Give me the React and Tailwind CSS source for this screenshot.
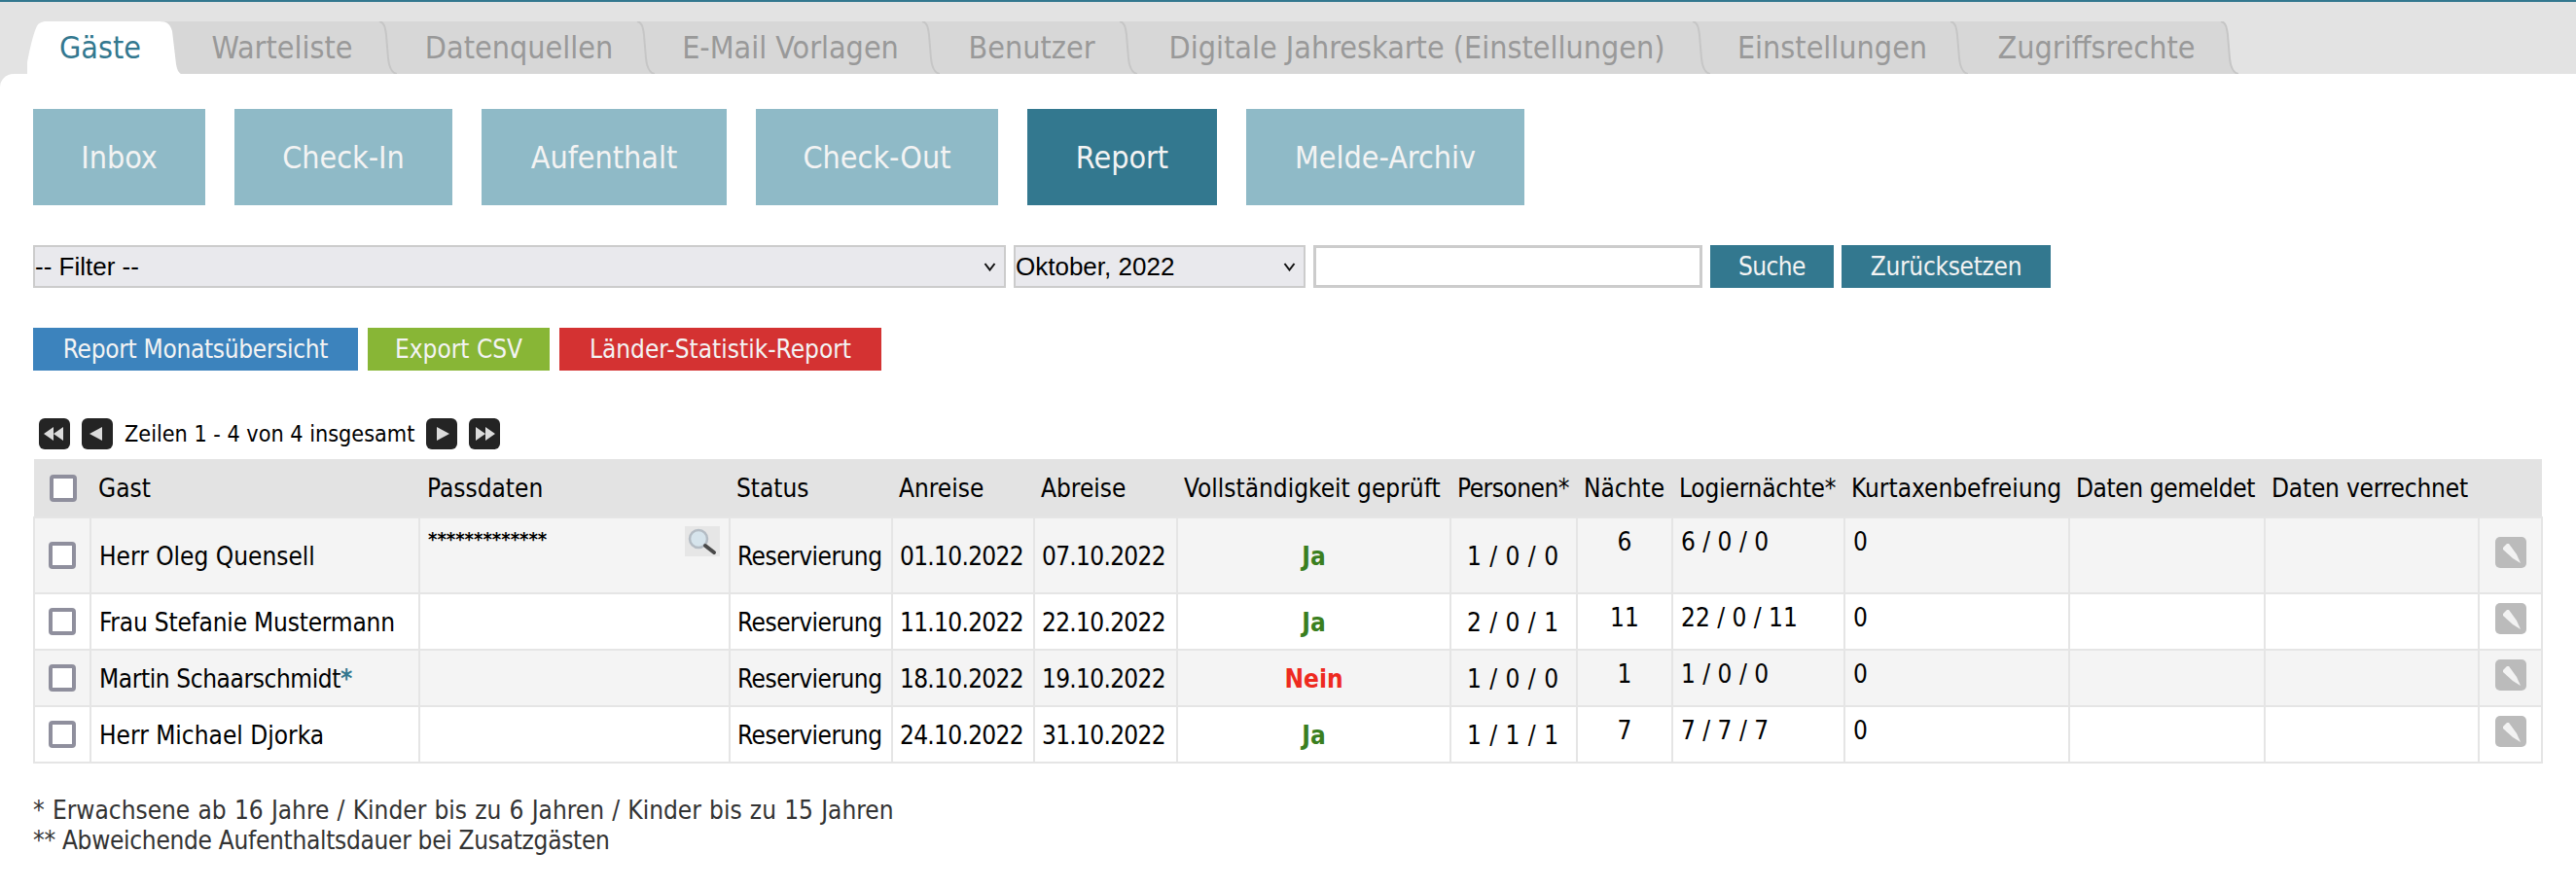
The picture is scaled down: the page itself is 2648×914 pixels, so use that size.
const font = "font-['DejaVu_Sans',sans-serif] [font-stretch:condensed]";

const tabs = [
  { label: 'Warteliste', w: 'w-[222px]' },
  { label: 'Datenquellen', w: 'w-[265px]' },
  { label: 'E-Mail Vorlagen', w: 'w-[293px]' },
  { label: 'Benutzer', w: 'w-[203px]' },
  { label: 'Digitale Jahreskarte (Einstellungen)', w: 'w-[589px]' },
  { label: 'Einstellungen', w: 'w-[265px]' },
  { label: 'Zugriffsrechte', w: 'w-[278px]', last: true },
];

const sections = [
  { label: 'Inbox', w: 'w-[177px]' },
  { label: 'Check-In', w: 'w-[224px]' },
  { label: 'Aufenthalt', w: 'w-[252px]' },
  { label: 'Check-Out', w: 'w-[249px]' },
  { label: 'Report', w: 'w-[195px]', active: true },
  { label: 'Melde-Archiv', w: 'w-[286px]' },
];

const columns = [
  'w-[58px]', 'w-[338px]', 'w-[319px]', 'w-[167px]', 'w-[146px]', 'w-[147px]', 'w-[281px]',
  'w-[130px]', 'w-[98px]', 'w-[177px]', 'w-[231px]', 'w-[201px]', 'w-[220px]', 'w-[65px]',
];

const headers = [
  { label: 'Gast', cls: 'pl-[8px]' },
  { label: 'Passdaten', cls: 'pl-[8px]' },
  { label: 'Status' },
  { label: 'Anreise' },
  { label: 'Abreise' },
  { label: 'Vollständigkeit geprüft' },
  { label: 'Personen*', cls: 'tracking-[-0.5px]' },
  { label: 'Nächte' },
  { label: 'Logiernächte*', cls: 'tracking-[-0.2px]' },
  { label: 'Kurtaxenbefreiung' },
  { label: 'Daten gemeldet', cls: 'tracking-[-0.4px]' },
  { label: 'Daten verrechnet', cls: 'tracking-[-0.2px]' },
];

const rows = [
  { name: 'Herr Oleg Quensell', pass: true, from: '01.10.2022', to: '07.10.2022', ok: true, persons: '1 / 0 / 0', nights: '6', logier: '6 / 0 / 0', h: 'h-[78px]' },
  { name: 'Frau Stefanie Mustermann', cls: 'tracking-[-0.2px]', from: '11.10.2022', to: '22.10.2022', ok: true, persons: '2 / 0 / 1', nights: '11', logier: '22 / 0 / 11', h: 'h-[58px]' },
  { name: 'Martin Schaarschmidt', cls: 'tracking-[-0.4px]', star: true, from: '18.10.2022', to: '19.10.2022', ok: false, persons: '1 / 0 / 0', nights: '1', logier: '1 / 0 / 0', h: 'h-[58px]' },
  { name: 'Herr Michael Djorka', from: '24.10.2022', to: '31.10.2022', ok: true, persons: '1 / 1 / 1', nights: '7', logier: '7 / 7 / 7', h: 'h-[58px]' },
];

const TabEdge = ({ last }) => (
  <svg className="absolute right-0 top-0" width="22" height="54" viewBox="0 0 22 54">
    {last && <path d="M4 0C9 1 10 6 11 14L13 38C14 48 17 53 22 54V0z" fill="#e3e3e3" />}
    <path d="M4 0C9 1 10 6 11 14L13 38C14 48 17 53 22 54" fill="none" stroke="#c6c6c6" strokeWidth="2" />
  </svg>
);

const ActiveTab = () => (
  <div className="relative w-[158px] h-[54px] flex items-center justify-center pr-[8px] text-[32px] text-[#33788f]">
    <svg className="absolute left-0 top-0" width="158" height="54" viewBox="0 0 158 54">
      <path d="M120 0H158V54H120z" fill="#d7d7d7" />
      <path d="M0 54V42C3 26 6 14 9 7 11 2 14 0 20 0H136C144 0 147 3 149 10L153 44C154 50 156 53 158 54z" fill="#ffffff" />
    </svg>
    <span className="relative">Gäste</span>
  </div>
);

const Check = () => (
  <span className="block w-[28px] h-[28px] mx-auto rounded-[4px] border-[4px] border-[#8f8f9d] bg-white"></span>
);

const Pager = ({ dir, double }) => (
  <span className="block w-[32px] h-[32px] rounded-[6px] bg-[#242424]">
    <svg width="32" height="32" viewBox="0 0 32 32" fill="#dcdcdc">
      {dir === 'left' ? (
        double ? <path d="M15 9v14L5 16zM25 9v14L15 16z" /> : <path d="M21 9v14L8 16z" />
      ) : (
        double ? <path d="M7 9v14l10-7zM17 9v14l10-7z" /> : <path d="M11 9v14l13-7z" />
      )}
    </svg>
  </span>
);

const Lens = () => (
  <span className="absolute right-[9px] top-[8px] block w-[36px] h-[31px] bg-[#e6e6e6]">
    <svg width="36" height="31" viewBox="0 0 36 31" fill="none">
      <circle cx="14" cy="13" r="9" fill="#d6e4ec" stroke="#b4bcc4" strokeWidth="2.5" />
      <path d="M21 20l9 7" stroke="#4a4a4a" strokeWidth="4" strokeLinecap="round" />
    </svg>
  </span>
);

const Edit = () => (
  <span className="block mx-auto mb-[6px] w-[32px] h-[32px] rounded-[5px] bg-[#bbbbbb]">
    <svg width="32" height="32" viewBox="0 0 32 32">
      <path d="M8 11L12 7 14 7 22 18 26 27 18 22 8 13z" fill="#f2f2f2" />
    </svg>
  </span>
);

const Chevron = () => (
  <svg className="absolute right-[10px] top-[18px] pointer-events-none" width="13" height="9" viewBox="0 0 13 9" fill="none">
    <path d="M1.5 1l5 6.5 5-6.5" stroke="#111111" strokeWidth="2" />
  </svg>
);

export default function App() {
  const selectClass = "w-full h-full appearance-none bg-[#e9e9ed] border-2 border-[#cccccc] pl-0 text-[26px] font-['Liberation_Sans',sans-serif] [font-stretch:normal]";

  return (
    <div className={`${font} bg-[#e3e3e3] min-h-[914px] border-t-2 border-[#33788f] text-[26px] text-black`}>
      <div className="h-[74px] pt-[20px] pl-[28px] flex">
        <ActiveTab />
        {tabs.map((tab) => (
          <div
            key={tab.label}
            className={`${tab.w} relative h-[54px] flex items-center justify-center pr-[14px] text-[32px] text-[#999999] bg-[#d7d7d7]`}
          >
            {tab.label}
            <TabEdge last={tab.last} />
          </div>
        ))}
      </div>

      <div className="bg-white rounded-tl-[14px] min-h-[838px] pt-[36px] px-[34px]">
        <div className="flex gap-[30px]">
          {sections.map((s) => (
            <div
              key={s.label}
              className={`${s.w} h-[99px] flex items-center justify-center text-[32px] text-[#f3f3f3] ${
                s.active ? 'bg-[#33788f]' : 'bg-[#8fbac7]'
              }`}
            >
              {s.label}
            </div>
          ))}
        </div>

        <div className="flex gap-[8px] mt-[41px]">
          <div className="relative w-[1000px] h-[44px]">
            <select className={selectClass}>
              <option>-- Filter --</option>
            </select>
            <Chevron />
          </div>
          <div className="relative w-[300px] h-[44px]">
            <select className={selectClass}>
              <option>Oktober, 2022</option>
            </select>
            <Chevron />
          </div>
          <input className="w-[400px] h-[44px] bg-white border-[3px] border-[#cccccc]" />
          <div className="w-[127px] h-[44px] bg-[#33788f] text-[#f3f3f3] flex items-center justify-center tracking-[-0.6px]">Suche</div>
          <div className="w-[215px] h-[44px] bg-[#33788f] text-[#f3f3f3] flex items-center justify-center tracking-[-0.3px]">Zurücksetzen</div>
        </div>

        <div className="flex gap-[10px] mt-[41px] text-[#f3f3f3]">
          <div className="w-[334px] h-[44px] bg-[#3c83bd] flex items-center justify-center tracking-[-0.3px]">Report Monatsübersicht</div>
          <div className="w-[187px] h-[44px] bg-[#88b636] flex items-center justify-center">Export CSV</div>
          <div className="w-[331px] h-[44px] bg-[#d43232] flex items-center justify-center">Länder-Statistik-Report</div>
        </div>

        <div className="flex items-center h-[32px] mt-[49px] pl-[6px]">
          <div className="flex gap-[12px]">
            <Pager dir="left" double />
            <Pager dir="left" />
          </div>
          <span className="mx-[12px] text-[23.2px]">Zeilen 1 - 4 von 4 insgesamt</span>
          <div className="flex gap-[12px]">
            <Pager dir="right" />
            <Pager dir="right" double />
          </div>
        </div>

        <table className="mt-[10px] w-[2580px] table-fixed border-collapse">
          <colgroup>
            {columns.map((c, i) => <col key={i} className={c} />)}
          </colgroup>
          <thead>
            <tr className="h-[60px] bg-[#e3e3e3]">
              <th className="p-0 pl-[2px]"><Check /></th>
              {headers.map((h) => (
                <th key={h.label} className={`px-[7px] pt-[2px] text-left font-normal whitespace-nowrap ${h.cls || ''}`}>{h.label}</th>
              ))}
              <th></th>
            </tr>
          </thead>
          <tbody>
            {rows.map((r, i) => {
              const cell = 'border-2 border-[#e5e5e5] px-[8px] pt-[2px] whitespace-nowrap';
              const dataCell = 'border-2 border-[#e5e5e5] px-[7px] pt-[2px] whitespace-nowrap';
              const topCell = 'border-2 border-[#e5e5e5] px-[8px] pt-[5px] align-top whitespace-nowrap';
              return (
                <tr key={r.name} className={`${r.h} ${i % 2 === 0 ? 'bg-[#f4f4f4]' : 'bg-white'}`}>
                  <td className="border-2 border-[#e5e5e5] p-0"><Check /></td>
                  <td className={`${cell} ${r.cls || ''}`}>
                    {r.name}
                    {r.star && <span className="text-[#33788f] font-bold">*</span>}
                  </td>
                  <td className="border-2 border-[#e5e5e5] px-[8px] relative align-top whitespace-nowrap">
                    {r.pass && (
                      <>
                        <span className="text-[20px] font-bold">*************</span>
                        <Lens />
                      </>
                    )}
                  </td>
                  <td className={`${dataCell} tracking-[-0.5px]`}>Reservierung</td>
                  <td className={`${dataCell} tracking-[-0.7px]`}>{r.from}</td>
                  <td className={`${dataCell} tracking-[-0.7px]`}>{r.to}</td>
                  <td className={`${cell} text-center font-bold ${r.ok ? 'text-[#3a7f1f]' : 'text-[#ee2a1f]'}`}>
                    {r.ok ? 'Ja' : 'Nein'}
                  </td>
                  <td className={`${cell} pr-[10px] text-center [word-spacing:1px]`}>{r.persons}</td>
                  <td className={`${topCell} text-center`}>{r.nights}</td>
                  <td className={topCell}>{r.logier}</td>
                  <td className={topCell}>0</td>
                  <td className={cell}></td>
                  <td className={cell}></td>
                  <td className="border-2 border-[#e5e5e5] p-0"><Edit /></td>
                </tr>
              );
            })}
          </tbody>
        </table>

        <div className="mt-[33px] leading-[31px] text-[#333333]">
          <div className="[word-spacing:0.8px]">* Erwachsene ab 16 Jahre / Kinder bis zu 6 Jahren / Kinder bis zu 15 Jahren</div>
          <div className="tracking-[-0.3px]">** Abweichende Aufenthaltsdauer bei Zusatzgästen</div>
        </div>
      </div>
    </div>
  );
}
